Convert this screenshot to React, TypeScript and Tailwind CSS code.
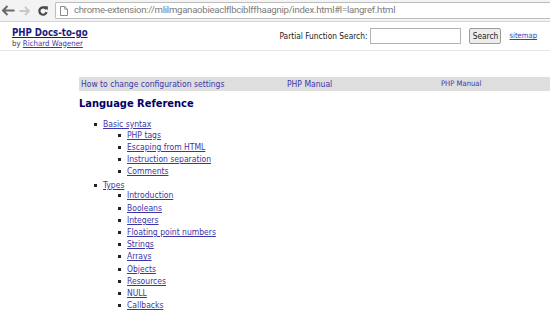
import React from 'react';

const basic = ['PHP tags', 'Escaping from HTML', 'Instruction separation', 'Comments'];
const types = ['Introduction', 'Booleans', 'Integers', 'Floating point numbers', 'Strings', 'Arrays', 'Objects', 'Resources', 'NULL', 'Callbacks'];

function SubList({ items }: { items: string[] }) {
  return (
    <ul className="-mt-[1.7px]">
      {items.map((t) => (
        <li key={t} className="relative pl-[24px]">
          <span className="absolute left-[14.5px] top-[5px] w-[3px] h-[3px] bg-[#222]"></span>
          <a className="underline">{t}</a>
        </li>
      ))}
    </ul>
  );
}

export default function App() {
  return (
    <div className="w-[550px] h-[313px] overflow-hidden bg-white font-['DejaVu_Sans_Condensed','DejaVu_Sans',sans-serif]">
      {/* Browser toolbar */}
      <div className="h-[22px] bg-[#f3f3f3] border-b border-[#d4d4d4] flex items-center">
        <svg width="13" height="11" viewBox="0 0 13 11" className="ml-[2px]">
          <path d="M5.5 1 L1 5.5 L5.5 10 M1 5.5 H12.5" stroke="#6a6a6a" strokeWidth="2" fill="none" />
        </svg>
        <svg width="11" height="10" viewBox="0 0 11 10" className="ml-[4px]">
          <path d="M6 1 L10 5 L6 9 M10 5 H0.5" stroke="#c6c6c6" strokeWidth="1.8" fill="none" />
        </svg>
        <svg width="10" height="10" viewBox="0 0 10 10" className="ml-[8px]">
          <path d="M8.3 3.2 A3.7 3.7 0 1 0 8.6 6.2" stroke="#4a4a4a" strokeWidth="2.2" fill="none" />
          <path d="M5.8 0.2 L9.8 0.2 L9.8 4.2 Z" fill="#4a4a4a" />
        </svg>
        <div className="ml-[7px] flex-1 h-[17px] bg-white border border-[#bdbdbd] border-r-0 rounded-l-[2px] flex items-center">
          <svg width="8" height="10" viewBox="0 0 8 10" className="ml-[4px]">
            <path d="M0.5 0.5 H4.8 L7.5 3.2 V9.5 H0.5 Z M4.8 0.5 V3.2 H7.5" stroke="#8a8a8a" fill="none" />
          </svg>
          <span className="ml-[6px] text-[9.6px] tracking-[-0.27px] text-[#7c7c7c] font-['Roboto',sans-serif] whitespace-nowrap">chrome-extension://mlilmganaobieaclflbciblffhaagnip/index.html#l=langref.html</span>
        </div>
      </div>

      {/* Page header */}
      <div className="h-[29px] border-b border-[#e6e6e6] flex items-start">
        <div className="ml-[12px] mt-[6px] leading-none">
          <a className="block text-[9.6px] font-bold text-[#1c1c80] underline">PHP Docs-to-go</a>
          <div className="mt-[2px] text-[7.8px] text-[#444]">
            by <a className="text-[#3c35a8] underline">Richard Wagener</a>
          </div>
        </div>
        <div className="ml-auto mr-[13px] mt-[6px] flex items-center">
          <span className="text-[8.3px] text-[#222]">Partial Function Search:</span>
          <div className="ml-[3px] w-[91px] h-[16px] border border-[#b3b3b3] bg-white"></div>
          <button className="ml-[8px] w-[32px] h-[16px] border border-[#9c9c9c] rounded-[2px] bg-[#ededed] text-[8.3px] text-[#222] leading-none">Search</button>
          <a className="ml-[8px] text-[7.6px] text-[#3344bb] underline">sitemap</a>
        </div>
      </div>

      {/* Nav bar */}
      <div className="mt-[26px] ml-[79px] h-[14px] bg-[#dedede] flex items-center text-[#3c35a8] whitespace-nowrap">
        <span className="ml-[2px] w-[206px] text-[8.5px]">How to change configuration settings</span>
        <span className="w-[154px] text-[8.5px]">PHP Manual</span>
        <span className="text-[7.6px]">PHP Manual</span>
      </div>

      <h2 className="ml-[79px] mt-[7px] text-[11px] font-bold text-[#000066] leading-none">Language Reference</h2>

      <ul className="mt-[9px] text-[8.5px] leading-[12.2px] text-[#3c35a8]">
        <li className="relative pl-[103px]">
          <span className="absolute left-[94px] top-[5px] w-[3px] h-[3px] bg-[#222]"></span>
          <a className="underline">Basic syntax</a>
          <SubList items={basic} />
        </li>
        <li className="relative pl-[103px] mt-[1.5px]">
          <span className="absolute left-[94px] top-[5px] w-[3px] h-[3px] bg-[#222]"></span>
          <a className="underline">Types</a>
          <SubList items={types} />
        </li>
      </ul>
    </div>
  );
}
